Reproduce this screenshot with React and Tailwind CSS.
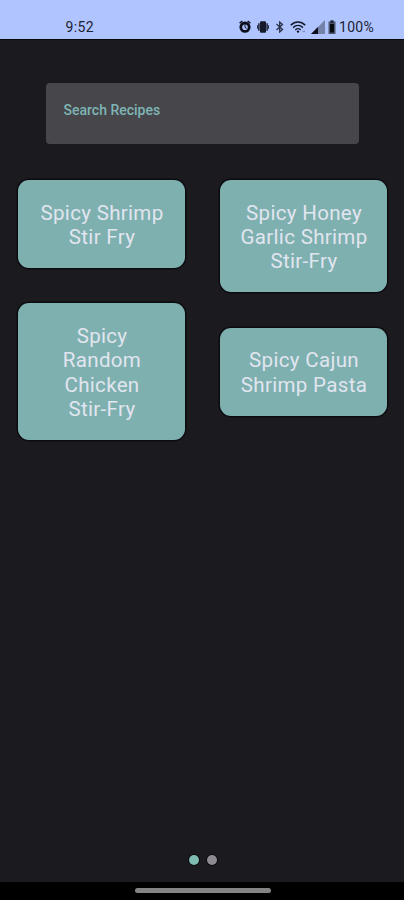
const recipeColumns = [
  [
    { id: 1, lines: ["Spicy Shrimp", "Stir Fry"] },
    { id: 2, lines: ["Spicy", "Random", "Chicken", "Stir-Fry"] },
  ],
  [
    { id: 3, lines: ["Spicy Honey", "Garlic Shrimp", "Stir-Fry"] },
    { id: 4, lines: ["Spicy Cajun", "Shrimp Pasta"] },
  ],
];

function AlarmIcon() {
  return (
    <svg className="w-3 h-[13px]" viewBox="0 0 12 13" fill="none" stroke="#0b0e1a">
      <circle cx="6" cy="7.2" r="4.2" strokeWidth="2.8" />
      <path d="M.6 3.3 3.3 1M11.4 3.3 8.7 1" strokeWidth="1.5" />
      <path d="M6 4.6v2.8l1.6 1" strokeWidth="1" />
    </svg>
  );
}

function VibrateIcon() {
  return (
    <svg className="w-3 h-3" viewBox="0 0 12 12" fill="#15192a">
      <rect x="3" y=".3" width="6" height="11.4" rx="1" />
      <path d="M1.2 2.2h1.4v7.6H1.2zM9.4 2.2h1.4v7.6H9.4zM0 4.2h.9v3.6H0zM11.1 4.2h.9v3.6h-.9z" />
    </svg>
  );
}

function BluetoothIcon() {
  return (
    <svg className="w-[9px] h-3" viewBox="0 0 9 12" fill="none" stroke="#29304a">
      <path d="m1.5 3.1 6 5.4L4.7 11V1l2.8 2.5-6 5.4" strokeWidth="1.3" />
    </svg>
  );
}

function WifiIcon() {
  return (
    <svg className="w-4 h-3" viewBox="0 0 16 12" fill="none" stroke="#15192a">
      <path d="M.8 4.1C5-.1 11-.1 15.2 4.1" strokeWidth="1.6" />
      <path d="M3.1 6.6c2.9-2.8 6.9-2.8 9.8 0" strokeWidth="1.5" />
      <path d="M5.3 8.9c1.6-1.5 3.8-1.5 5.4 0" strokeWidth="1.4" />
      <circle cx="8" cy="10.6" r="1.2" fill="#15192a" stroke="none" />
      <path d="M12.5 10.5h2.5" strokeWidth="1.2" opacity=".35" />
    </svg>
  );
}

function SignalIcon() {
  return (
    <svg className="w-3.5 h-[14px]" viewBox="0 0 14 14">
      <path d="M0 14 14 0v14z" fill="#7482a8" />
      <path d="M0 14 7 7v7z" fill="#0b0e1a" />
    </svg>
  );
}

function BatteryIcon() {
  return (
    <svg className="w-2 h-[14px]" viewBox="0 0 8 14">
      <path d="M2.5 0h3v1.5H7.5V14h-7V1.5h2z" fill="#4d566f" />
      <path d="M2 4h4v8.5H2z" fill="#080b12" />
      <path d="M2.5 1.2h3v1.5h-3z" fill="#15192a" />
    </svg>
  );
}

function StatusBar() {
  return (
    <header className="flex h-[39px] shrink-0 items-end justify-between bg-[#b0c5ff] pb-[5px] pl-[65.5px] pr-[30px] text-[#1c2133]">
      <span className="relative top-px text-[14px] leading-[15px] tracking-[0.4px]">9:52</span>
      <div className="flex items-center">
        <AlarmIcon />
        <div className="ml-1.5 flex"><VibrateIcon /></div>
        <div className="ml-1.5 flex"><BluetoothIcon /></div>
        <div className="ml-1.5 flex"><WifiIcon /></div>
        <div className="ml-[5px] flex"><SignalIcon /></div>
        <div className="ml-[3px] flex"><BatteryIcon /></div>
        <span className="relative top-px ml-0.5 w-9 whitespace-nowrap pl-px text-[14px] leading-[15px] tracking-[0.3px]">
          100%
        </span>
      </div>
    </header>
  );
}

function RecipeCard({ lines }) {
  return (
    <button
      type="button"
      className="w-full rounded-[11px] bg-[#7eb0b0] py-[19.7px] text-center text-[20.5px] leading-[24.3px] tracking-[0.33px] text-[#e1e5ef] shadow-[0_0_0_1.5px_#0c0c10]"
    >
      {lines.map((line) => (
        <span key={line} className="relative left-[0.5px] top-px block">
          {line}
        </span>
      ))}
    </button>
  );
}

export default function App() {
  return (
    <div className="flex h-screen w-full flex-col overflow-hidden bg-[#1b1a1f] font-['Roboto',sans-serif]">
      <StatusBar />
      <div className="h-px shrink-0 bg-[#08080c]" />

      <main className="flex flex-1 flex-col">
        <div className="ml-[46px] mr-[45px] mt-[43px] h-[61px] rounded-[4px] bg-[#47464b] px-[17.5px] pt-[18px]">
          <label className="block text-[14px] font-medium leading-[18px] text-[#7eb5b4]">
            Search Recipes
          </label>
        </div>

        <div className="mt-9 flex items-start gap-[35px] pl-[18px] pr-[17px]">
          {recipeColumns.map((column, index) => (
            <div key={index} className="flex flex-1 flex-col gap-[35.5px]">
              {column.map((recipe) => (
                <RecipeCard key={recipe.id} lines={recipe.lines} />
              ))}
            </div>
          ))}
        </div>

        <div className="mb-[17px] mt-auto flex justify-center gap-2 pl-px">
          <span className="size-2.5 rounded-full bg-[#7ebbb0] shadow-[0_0_0_1px_#0c0c10]" />
          <span className="size-2.5 rounded-full bg-[#8d8b91] shadow-[0_0_0_1px_#0c0c10]" />
        </div>
      </main>

      <footer className="flex h-[18px] shrink-0 justify-center bg-black pl-px pt-[6px]">
        <div className="h-[5px] w-[136px] rounded-full bg-[#858484]" />
      </footer>
    </div>
  );
}
